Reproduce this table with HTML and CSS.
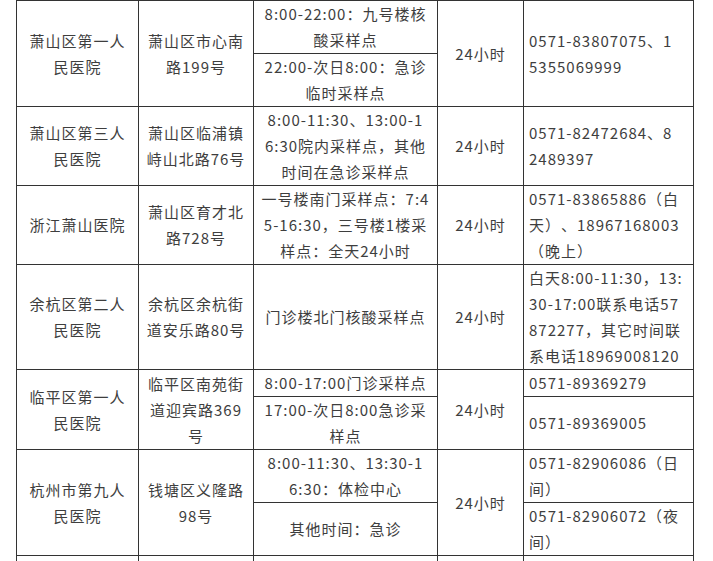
FILE: index.html
```html
<!DOCTYPE html>
<html lang="zh-CN">
<head>
<meta charset="utf-8">
<title>核酸采样点</title>
<link rel="stylesheet" href="styles.css">
</head>
<body>
<div class="page">
<table class="grid">
<colgroup>
<col class="c1"><col class="c2"><col class="c3"><col class="c4"><col class="c5">
</colgroup>
<tbody>
<tr>
<td rowspan="2">萧山区第一人<br>民医院</td>
<td rowspan="2">萧山区市心南<br>路199号</td>
<td>8:00-22:00：九号楼核<br>酸采样点</td>
<td rowspan="2">24小时</td>
<td rowspan="2" class="l">0571-83807075、1<br>5355069999</td>
</tr>
<tr>
<td>22:00-次日8:00：急诊<br>临时采样点</td>
</tr>
<tr>
<td>萧山区第三人<br>民医院</td>
<td>萧山区临浦镇<br>峙山北路76号</td>
<td>8:00-11:30、13:00-1<br>6:30院内采样点，其他<br>时间在急诊采样点</td>
<td>24小时</td>
<td class="l">0571-82472684、8<br>2489397</td>
</tr>
<tr>
<td>浙江萧山医院</td>
<td>萧山区育才北<br>路728号</td>
<td>一号楼南门采样点：7:4<br>5-16:30，三号楼1楼采<br>样点：全天24小时</td>
<td>24小时</td>
<td class="l">0571-83865886（白<br>天）、18967168003<br>（晚上）</td>
</tr>
<tr>
<td>余杭区第二人<br>民医院</td>
<td>余杭区余杭街<br>道安乐路80号</td>
<td>门诊楼北门核酸采样点</td>
<td>24小时</td>
<td class="l">白天8:00-11:30，13:<br>30-17:00联系电话57<br>872277，其它时间联<br>系电话18969008120</td>
</tr>
<tr>
<td rowspan="2">临平区第一人<br>民医院</td>
<td rowspan="2">临平区南苑街<br>道迎宾路369<br>号</td>
<td>8:00-17:00门诊采样点</td>
<td rowspan="2">24小时</td>
<td class="l">0571-89369279</td>
</tr>
<tr>
<td>17:00-次日8:00急诊采<br>样点</td>
<td class="l">0571-89369005</td>
</tr>
<tr>
<td rowspan="2">杭州市第九人<br>民医院</td>
<td rowspan="2">钱塘区义隆路<br>98号</td>
<td>8:00-11:30、13:30-1<br>6:30：体检中心</td>
<td rowspan="2">24小时</td>
<td class="l">0571-82906086（日<br>间）</td>
</tr>
<tr>
<td>其他时间：急诊</td>
<td class="l">0571-82906072（夜<br>间）</td>
</tr>
<tr class="tail">
<td></td><td></td><td></td><td></td><td></td>
</tr>
</tbody>
</table>
</div>
</body>
</html>
```

FILE: styles.css
```css
html, body {
  margin: 0;
  padding: 0;
  background: #ffffff;
}
.page {
  padding-left: 16px;
}
.grid {
  border-collapse: collapse;
  table-layout: fixed;
  width: 677px;
  font-family: "Noto Sans CJK SC", "Noto Sans", sans-serif;
  font-size: 15px;
  letter-spacing: 1px;
  line-height: 26px;
  color: #3e3e3e;
  text-spacing-trim: space-all;
}
.c1 { width: 122px; }
.c2 { width: 115px; }
.c3 { width: 184px; }
.c4 { width: 86px; }
.c5 { width: 170px; }
.grid td {
  border: 1px solid #333333;
  padding: 0 5px;
  text-align: center;
  vertical-align: middle;
  white-space: nowrap;
  overflow: hidden;
}
.grid td.l {
  text-align: left;
}
.tail td {
  height: 26px;
}
```
